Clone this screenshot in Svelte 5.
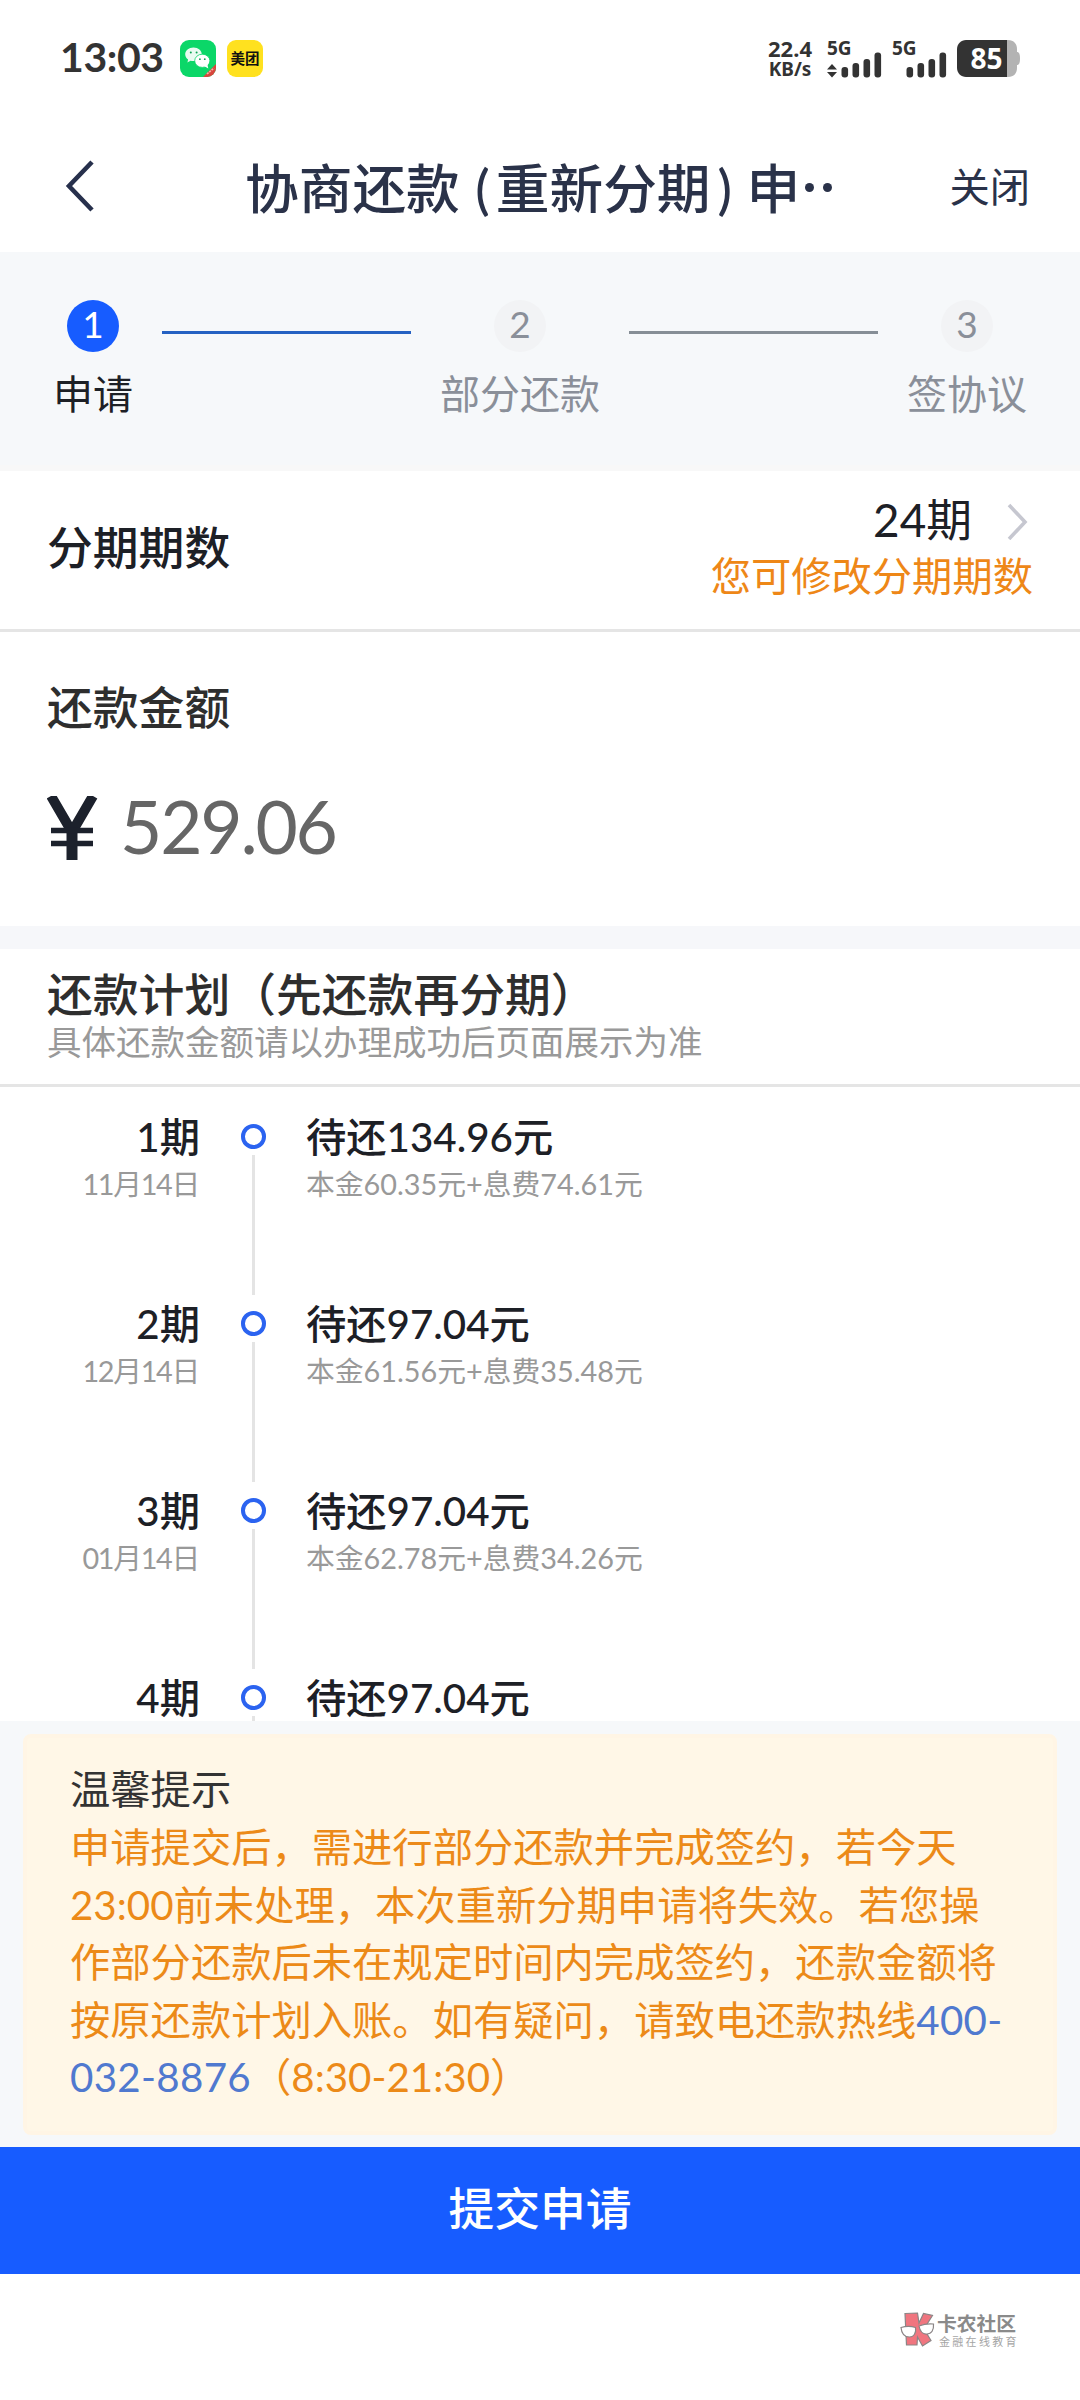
<script>
  const plan = [
    { no: '1期', date: '11月14日', due: '待还134.96元', detail: '本金60.35元+息费74.61元' },
    { no: '2期', date: '12月14日', due: '待还97.04元', detail: '本金61.56元+息费35.48元' },
    { no: '3期', date: '01月14日', due: '待还97.04元', detail: '本金62.78元+息费34.26元' },
    { no: '4期', due: '待还97.04元' }
  ];
  const signals = [{ data: true }, { data: false }];
</script>

<div class="page">
  <div class="status">
    <span class="clock">13:03</span>
    <svg class="app" width="36" height="37" viewBox="0 0 36 37">
      <defs><clipPath id="tile"><rect width="36" height="37" rx="9" /></clipPath></defs>
      <g clip-path="url(#tile)">
        <rect width="36" height="37" fill="#0bd768" />
        <path d="M23 37 L36 24 V37 Z" fill="#d8453c" />
        <path d="M27 34 L34 28" stroke="#f3b0a8" stroke-width="1.6" stroke-dasharray="2 1" />
        <path d="M13.500 7.500c-4.700 0-8.300 3-8.300 6.800 0 2.200 1.100 4 2.900 5.300l-.7 2.900 3.100-1.700c1 .2 2 .3 3 .3 4.700 0 8.300-3 8.300-6.800s-3.600-6.800-8.300-6.800z" fill="#e9fbf1" />
        <ellipse cx="22.300" cy="20.800" rx="7.600" ry="6.600" fill="#fff" stroke="#0bd768" stroke-width=".8" />
        <path d="M24 26l4.300 2.400-.9-3.800z" fill="#fff" />
        <circle cx="10.800" cy="12.600" r="1" fill="#0ca354" /><circle cx="16.600" cy="12.600" r="1" fill="#0ca354" />
        <circle cx="19.900" cy="19.200" r=".9" fill="#0ca354" /><circle cx="24.800" cy="19.200" r=".9" fill="#0ca354" />
      </g>
    </svg>
    <span class="meituan">美团</span>
    <div class="speed"><span>22.4</span><span class="unit">KB/s</span></div>
    {#each signals as s}
      <svg class="signal" width="56" height="56" viewBox="0 -8 56 56" fill="#333">
        <text x="0" y="17" class="net">5G</text>
        {#if s.data}<path d="M0 31.500 5 26l5 5.500zM0 34h10l-5 5.500z" />{/if}
        <rect x="14.500" y="29" width="6.600" height="10.500" rx="3" />
        <rect x="25.500" y="25" width="6.600" height="14.500" rx="3" />
        <rect x="36.500" y="21" width="6.600" height="18.500" rx="3" />
        <rect x="47.500" y="14.500" width="6.600" height="25" rx="3" />
      </svg>
    {/each}
    <svg class="battery" width="64" height="53" viewBox="0 -8 64 53">
      <path d="M49 0h2c6 0 9 4 9 9v3c2 0 3 2 3 6.500S62 25 60 25v3c0 5-3 9-9 9h-2z" fill="#b3b3b3" />
      <path d="M9 0h41v37H9c-5 0-9-4-9-9V9c0-5 4-9 9-9z" fill="#333" />
      <text x="29.500" y="28.500" class="level">85</text>
    </svg>
  </div>

  <div class="nav">
    <svg class="back" width="32" height="56" viewBox="0 0 32 56"><path d="M27 4 4 28l23 24" fill="none" stroke="#27304c" stroke-width="4.600" /></svg>
    <div class="title"><span>协商还款</span><span class="po">(</span><span>重新分期</span><span class="pc">)</span><span>申</span><i></i><i></i></div>
    <span class="close">关闭</span>
  </div>

  <div class="steps">
    <div class="step on"><b>1</b><span>申请</span></div>
    <div class="bar on"></div>
    <div class="step"><b>2</b><span>部分还款</span></div>
    <div class="bar"></div>
    <div class="step"><b>3</b><span>签协议</span></div>
  </div>

  <div class="term">
    <span class="heading">分期期数</span>
    <div class="choice">
      <div class="value"><span>24期</span>
        <svg width="26" height="40" viewBox="0 0 26 40"><path d="M2 5 18 22 2 39" fill="none" stroke="#c6c7d0" stroke-width="3.600" /></svg>
      </div>
      <span class="hint">您可修改分期期数</span>
    </div>
  </div>

  <div class="amount">
    <span class="heading dark">还款金额</span>
    <div class="sum">
      <svg width="52" height="64" viewBox="0 0 52 64" stroke="#1c212c" fill="none">
        <path d="M4 0 25 36 46 0" stroke-width="10" /><path d="M25 32V64" stroke-width="11" /><path d="M4 34.500H46M4 47.500H46" stroke-width="5.600" />
      </svg>
      <span class="figure">529.06</span>
    </div>
  </div>

  <div class="planhead">
    <span class="heading dark">还款计划（先还款再分期）</span>
    <span class="note">具体还款金额请以办理成功后页面展示为准</span>
  </div>

  <div class="plan">
    {#each plan as p}
      <div class="item">
        <div class="when"><span class="main">{p.no}</span>{#if p.date}<span class="sub date">{p.date}</span>{/if}</div>
        <div class="rail"><i class="dot"></i><i class="line"></i></div>
        <div class="what"><span class="main">{p.due}</span>{#if p.detail}<span class="sub">{p.detail}</span>{/if}</div>
      </div>
    {/each}
  </div>

  <div class="tipwrap">
    <div class="tip">
      <span class="tiptitle">温馨提示</span>
      <p>申请提交后，需进行部分还款并完成签约，若今天<br />23:00前未处理，本次重新分期申请将失效。若您操<br />作部分还款后未在规定时间内完成签约，还款金额将<br />按原还款计划入账。如有疑问，请致电还款热线<em>400-<br />032-8876</em>（8:30-21:30）</p>
    </div>
  </div>

  <div class="submit">提交申请</div>

  <div class="foot">
    <svg width="36" height="36" viewBox="0 0 36 36" stroke="#8b8586" stroke-width="1.200">
      <path d="M5 1.500 17.500 1 19 11 23.500 1.500 32.500 3.500 24 17 31 28.500 22.500 34 17.500 25 17 33 6.500 33z" fill="#f0757f" />
      <path d="M1 15.500c5-1.500 10-1.500 14.500 0 1 6-2 9.500-6 9.500-5 0-8-4-8.500-9.500z" fill="#fff" />
      <path d="M19 14c5-2 10-2.500 14.500-2 .5 6-2 10-6.500 10-4.500.5-7-3-8-8z" fill="#fff" />
    </svg>
    <div class="brand"><span>卡农社区</span><small>金融在线教育</small></div>
  </div>
</div>

<style>
  :global(body) { background: #fff; }
  .page {
    width: 1080px; height: 2400px; overflow: hidden; background: #fff; color: #1d2026;
    display: flex; flex-direction: column; white-space: nowrap;
    font-family: Lato, "Noto Sans CJK SC", sans-serif; font-size: 40.3px;
  }
  .page > div { box-sizing: border-box; flex: none; }
  span, small { display: block; }

  .status { height: 116px; padding: 0 60px; display: flex; align-items: center; color: #333; }
  .clock { width: 120px; font-size: 41px; font-weight: 700; line-height: 48px; padding-bottom: 2px; letter-spacing: -.4px; }
  .meituan {
    width: 36px; height: 37px; margin-left: 11px; border-radius: 9px; background: #ffe11f; color: #111;
    font-size: 14.500px; font-weight: 700; line-height: 37px; text-align: center;
  }
  .speed {
    width: 48px; margin-left: auto; display: flex; flex-direction: column; align-items: center;
    font-family: "Noto Sans", sans-serif; font-size: 22px; font-weight: 700; line-height: 22px;
  }
  .unit { font-size: 19px; line-height: 21px; }
  .signal { margin-left: 13px; margin-right: -4px; }
  .net { font: 700 19px "Noto Sans", sans-serif; }
  .battery { margin-left: 13px; margin-right: -1px; }
  .level { font: 700 28px "Noto Sans", sans-serif; fill: #fff; text-anchor: middle; }

  .nav { height: 136px; padding: 11px 50px 7px 65px; display: flex; align-items: center; color: #2a3249; }
  .title { margin-left: 148px; padding-top: 3px; display: flex; align-items: center; font-size: 53.700px; font-weight: 500; line-height: 70px; }
  .po { width: 36px; text-align: right; padding-right: 6px; box-sizing: border-box; }
  .pc { width: 29px; padding-left: 7px; }
  .title i { width: 9px; height: 9px; border-radius: 50%; background: #2a3249; margin-left: 9px; }
  .title i:first-of-type { margin-left: 5px; }
  .close { margin-left: auto; padding-top: 2px; line-height: 60px; }

  .steps { height: 219px; padding: 48px 0 0 53px; display: flex; gap: 29px; background: #f6f8fa; border-bottom: 6px solid #f8f8f8; }
  .step { display: flex; flex-direction: column; align-items: center; color: #8a8f99; font-size: 40px; line-height: 60px; }
  .step b { width: 52px; height: 52px; border-radius: 50%; background: #f2f3f5; font-size: 37px; font-weight: 400; line-height: 48px; text-align: center; margin-bottom: 12px; }
  .step.on { color: #1d2026; }
  .step.on b { background: #175cff; color: #fff; }
  .bar { width: 249px; height: 3px; margin-top: 31px; background: #868e96; }
  .bar.on { background: #2561c2; }

  .heading { font-size: 45.800px; font-weight: 500; line-height: 60px; }
  .dark { color: #2e2e2e; }
  .term { height: 161px; padding: 0 47px 5px; display: flex; align-items: center; justify-content: space-between; border-bottom: 3px solid #e5e5e5; }
  .choice { display: flex; flex-direction: column; align-items: flex-end; }
  .value { display: flex; align-items: center; gap: 35px; font-size: 45.800px; line-height: 56px; }
  .hint { line-height: 56px; color: #ee8717; }

  .amount { height: 294px; padding: 46px 47px 0; }
  .sum { display: flex; align-items: center; margin-top: 54px; height: 72px; gap: 21px; color: #666; font-size: 73px; }
  .figure { letter-spacing: -2.200px; line-height: 72px; padding-bottom: 5px; }

  .planhead { height: 161px; border-top: 23px solid #f6f7fa; border-bottom: 3px solid #e5e5e5; padding: 16px 47px 0; }
  .note { color: #999; font-size: 34.500px; line-height: 34px; }

  .plan { height: 634px; overflow: hidden; padding-top: 21px; }
  .item { height: 187px; display: flex; }
  .when { width: 200px; text-align: right; }
  .main { font-weight: 500; line-height: 58px; padding-bottom: 2px; }
  .sub { font-size: 28.800px; line-height: 32px; color: #999; }
  .date { letter-spacing: -1.300px; padding-right: 1px; }
  .rail { width: 106px; display: flex; flex-direction: column; align-items: center; padding-top: 16px; }
  .dot { box-sizing: border-box; width: 25px; height: 25px; border: 4.500px solid #2b63f0; border-radius: 50%; }
  .line { width: 3px; height: 143px; margin-top: 6px; background: #e4e4e4; }

  .tipwrap { height: 426px; padding: 13px 23px 0; background: #f6f8fa; }
  .tip { box-sizing: border-box; height: 401px; border: 4px solid #fff5e5; border-radius: 8px; background: #fff7e7; padding: 21px 43px 0; }
  .tiptitle { color: #333; line-height: 59px; }
  .tip p { margin: 0; line-height: 57.500px; color: #ec8a18; }
  .tip em { font-style: normal; color: #5079cf; letter-spacing: .3px; }

  .submit { height: 127px; background: #175cff; color: #fff; font-size: 45.800px; font-weight: 500; line-height: 124px; text-align: center; }

  .foot { flex: 1; padding: 38px 0 0 900px; display: flex; gap: 1px; color: #8a8a8a; }
  .brand span { font-size: 19.800px; font-weight: 700; line-height: 23px; }
  .brand small { font-size: 11px; letter-spacing: 2.300px; line-height: 14px; padding-left: 2px; color: #a5a5a5; }
</style>
